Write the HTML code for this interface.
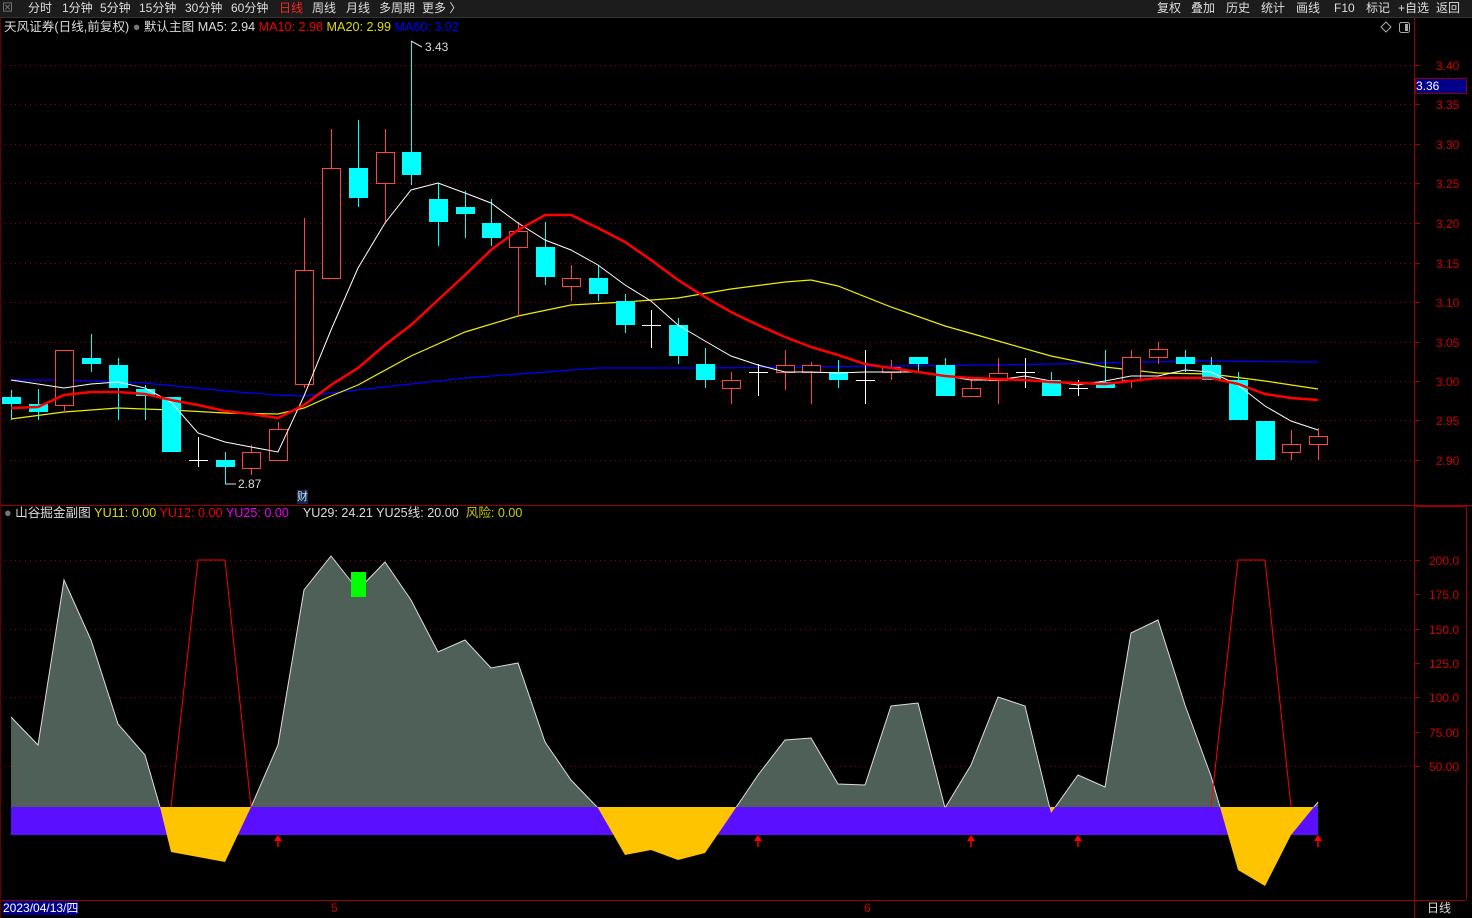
<!DOCTYPE html><html><head><meta charset="utf-8"><style>
body{margin:0;background:#000;width:1472px;height:918px;overflow:hidden;font-family:"Liberation Sans","Noto Sans CJK SC",sans-serif;}
svg{position:absolute;left:0;top:0}
.t{position:absolute;font-size:12px;white-space:nowrap;line-height:14px}
.h{font-size:12.6px}
.b{position:absolute;top:1px;font-size:12px;line-height:14px;color:#ddd;white-space:nowrap}
</style></head><body>
<svg id="s" width="1472" height="918" xmlns="http://www.w3.org/2000/svg">
<rect x="0" y="0" width="1472" height="17" fill="#1c1c1c"/>
<line x1="0" y1="17.5" x2="1472" y2="17.5" stroke="#333"/>
<g id="g"></g>
</svg>
<div class="t" style="left:2px;top:1px;color:#888;font-size:11px">⊠</div>
<div class="b" style="left:28px">分时</div><div class="b" style="left:62px">1分钟</div><div class="b" style="left:100px">5分钟</div><div class="b" style="left:139px">15分钟</div><div class="b" style="left:185px">30分钟</div><div class="b" style="left:231px">60分钟</div><div class="b" style="left:279px;color:#f22">日线</div><div class="b" style="left:312px">周线</div><div class="b" style="left:346px">月线</div><div class="b" style="left:379px">多周期</div><div class="b" style="left:422px">更多 〉</div>
<div class="b" style="left:1157px">复权</div><div class="b" style="left:1191px">叠加</div><div class="b" style="left:1226px">历史</div><div class="b" style="left:1261px">统计</div><div class="b" style="left:1296px">画线</div><div class="b" style="left:1334px">F10</div><div class="b" style="left:1366px">标记</div><div class="b" style="left:1398px">+自选</div><div class="b" style="left:1436px">返回</div>
<div class="t h" style="left:4px;top:20px;color:#ddd">天风证券(日线,前复权) <span style="color:#777">●</span> 默认主图 MA5: 2.94 <span style="color:#e00">MA10: 2.98</span> <span style="color:#dd0">MA20: 2.99</span> <span style="color:#00f">MA60: 3.02</span></div>
<div class="t h" style="left:4px;top:506px;color:#ddd"><span style="color:#777">●</span> 山谷掘金副图 <span style="color:#dd0">YU11: 0.00</span> <span style="color:#e00">YU12: 0.00</span> <span style="color:#e0e">YU25: 0.00</span>&nbsp;&nbsp;&nbsp;&nbsp;YU29: 24.21 YU25线: 20.00&nbsp;&nbsp;<span style="color:#cc0">风险: 0.00</span></div>
<div class="t" style="left:425px;top:40px;color:#ddd">3.43</div>
<div class="t" style="left:238px;top:477px;color:#ddd">2.87</div>
<div class="t" style="left:297px;top:490px;color:#ddd;background:#0a2a5a;font-size:11px">财</div>
<div class="t" style="left:1415px;top:78px;width:50px;background:#00008a;color:#fff;border:1px solid #800">3.36</div>
<div class="t" style="left:3px;top:901px;background:#00008a;color:#fff">2023/04/13/四</div>
<div class="t" style="left:331px;top:901px;color:#c00">5</div>
<div class="t" style="left:864px;top:901px;color:#c00">6</div>
<div class="t" style="left:1427px;top:901px;color:#ddd">日线</div>
<div id="lab"></div>
<script>
const g=document.getElementById('g');let h='';
const L=(a,b,c,d,col,w,ex)=>h+=`<line x1="${a}" y1="${b}" x2="${c}" y2="${d}" stroke="${col}" stroke-width="${w||1}" ${ex||''}/>`;
const py=p=>65+(3.40-p)*790;let lab='';
[3.40,3.35,3.30,3.25,3.20,3.15,3.10,3.05,3.00,2.95,2.90].forEach(p=>{const y=Math.round(py(p))+.5;L(0,y,1414,y,'#900',1,'stroke-dasharray="1 4"');L(1414,y,1420,y,'#900');lab+=`<div class="t" style="left:1436px;top:${y-7}px;color:#c00">${p.toFixed(2)}</div>`});
[[200,'200.0'],[175,'175.0'],[150,'150.0'],[125,'125.0'],[100,'100.0'],[75,'75.00'],[50,'50.00']].forEach(([v,s])=>{const y=Math.round(560+(200-v)*1.373)+.5;if(v%50==0)L(0,y,1414,y,'#900',1,'stroke-dasharray="1 4"');L(1414,y,1420,y,'#900');lab+=`<div class="t" style="left:1429px;top:${y-7}px;color:#c00">${s}</div>`});
document.getElementById('lab').innerHTML=lab;
L(1414.5,18,1414.5,918,'#900');L(1466.5,506,1466.5,900,'#900');L(0,505.5,1472,505.5,'#900');L(1414,506.5,1466,506.5,'#900');L(0,900.5,1466,900.5,'#900');L(0.5,18,0.5,918,'#600');
const cv=[[11,717],[38,745],[64,580],[91,640],[118,724],[145,755],[160,807],[171,852],[198,857],[225,862],[251,807],[278,745],[304,590],[331,556],[358,590],[385,562],[411,600],[438,652],[465,640],[491,668],[518,663],[545,742],[571,780],[598,808],[625,855],[651,850],[678,860],[705,853],[731,815],[758,775],[785,740],[811,738],[838,784],[865,785],[891,706],[918,703],[945,808],[971,765],[998,697],[1025,706],[1051,813],[1078,775],[1105,787],[1131,633],[1158,620],[1185,705],[1211,776],[1220,807],[1238,870],[1265,886],[1291,835],[1318,802]];
const pts=cv.map(p=>p.join(',')).join(' ');
h+=`<defs><clipPath id="a"><rect x="0" y="0" width="1472" height="807"/></clipPath><clipPath id="b"><rect x="0" y="807" width="1472" height="100"/></clipPath></defs>`;
h+=`<rect x="11" y="807" width="1307" height="28" fill="#5a10ff"/>`;
h+=`<polygon points="11,807 ${pts} 1318,807" fill="#4f6058" clip-path="url(#a)"/>`;
h+=`<polygon points="11,807 ${pts} 1318,807" fill="#ffc400" clip-path="url(#b)"/>`;
h+=`<polyline points="${pts}" fill="none" stroke="#ddd" stroke-width="1" clip-path="url(#a)"/>`;
h+=`<polyline points="171,807 198,560 225,560 251,807" fill="none" stroke="#f00"/><polyline points="1211,807 1238,560 1265,560 1291,807" fill="none" stroke="#f00"/>`;
h+=`<rect x="351" y="572" width="15" height="25" fill="#0f0"/>`;
[278,758,971,1078,1318].forEach(x=>{h+=`<polygon points="${x},835 ${x-4},841 ${x+4},841" fill="#f00"/>`;L(x,840,x,847,'#f00',1.5)});
const pl=(a,c,w)=>h+=`<polyline points="${a.map(p=>p.join(',')).join(' ')}" fill="none" stroke="${c}" stroke-width="${w}"/>`;
pl([[11,380],[64,380],[145,383],[225,391],[278,395],[304,396],[358,390],[411,384],[465,378],[545,372],[598,368],[700,368],[800,367],[900,366],[1000,365],[1100,363],[1200,361],[1318,362]],'#00f',1.2);
pl([[11,419],[64,412],[118,408],[171,410],[225,413],[278,414],[304,408],[331,396],[358,385],[411,356],[465,332],[518,316],[571,305],[625,302],[678,298],[731,289],[785,282],[811,280],[838,286],[891,307],[945,326],[998,341],[1051,356],[1105,367],[1158,373],[1211,374],[1265,381],[1318,389]],'#ee0',1.2);
const C=[[11,'c',397,404,390,420],[38,'c',404,412,389,420],[64,'r',350,405,350,412],[91,'c',358,364,334,372],[118,'c',365,388,358,420],[145,'c',389,396,385,420],[171,'c',397,452,397,452],[198,'w',460,460,437,467],[225,'c',460,467,452,484],[251,'r',452,468,445,475],[278,'r',429,460,422,460],[304,'r',270,384,218,388],[331,'r',168,278,129,278],[358,'c',168,198,120,207],[385,'r',152,183,129,222],[411,'c',152,175,41,185],[438,'c',199,222,183,246],[465,'c',207,214,191,238],[491,'c',223,238,199,246],[518,'r',231,247,222,317],[545,'c',247,277,222,285],[571,'r',278,286,265,301],[598,'c',278,294,265,301],[625,'c',301,325,294,333],[651,'w',325,325,310,348],[678,'c',325,356,318,364],[705,'c',364,380,348,388],[731,'r',380,388,372,404],[758,'w',372,372,364,396],[785,'r',365,372,350,390],[811,'r',365,372,362,404],[838,'c',372,380,360,388],[865,'w',380,380,350,404],[891,'r',367,372,360,380],[918,'c',357,364,357,372],[945,'c',365,396,358,396],[971,'r',388,396,380,396],[998,'r',373,380,358,404],[1025,'w',372,372,358,388],[1051,'c',380,396,372,396],[1078,'w',388,388,380,396],[1105,'c',382,388,350,388],[1131,'r',357,380,350,388],[1158,'r',349,357,342,364],[1185,'c',357,364,350,372],[1211,'c',365,380,357,380],[1238,'c',380,420,372,420],[1265,'c',421,460,421,460],[1291,'r',444,452,430,460],[1318,'r',436,444,428,460]];
C.forEach(([x,t,o,c,hi,lo])=>{const col=t=='c'?'#0ff':t=='r'?'#f44':'#fff';L(x+.5,hi,x+.5,lo,col);
if(t=='c')h+=`<rect x="${x-9}" y="${o}" width="19" height="${Math.max(c-o,2)}" fill="#0ff"/>`;
else if(t=='r')h+=`<rect x="${x-8.5}" y="${o+.5}" width="18" height="${c-o}" fill="#000" stroke="#f44"/>`;
else L(x-9,o+.5,x+10,o+.5,'#fff')});
pl([[11,380],[38,384],[64,388],[91,384],[118,382],[145,388],[171,402],[198,433],[225,442],[251,447],[278,452],[304,396],[331,330],[358,268],[385,223],[411,190],[438,183],[465,193],[491,203],[518,223],[545,240],[571,250],[598,265],[625,285],[651,301],[678,325],[705,341],[731,356],[758,365],[785,372],[811,372],[838,373],[865,372],[891,372],[918,372],[945,376],[971,380],[998,380],[1025,376],[1051,381],[1078,385],[1105,381],[1131,376],[1158,376],[1185,370],[1211,372],[1238,385],[1265,406],[1291,421],[1318,430]],'#fff',1);
pl([[11,408],[38,407],[64,395],[91,392],[118,392],[145,394],[171,400],[198,405],[225,411],[251,414],[278,418],[304,405],[331,385],[358,368],[385,345],[411,325],[438,300],[465,275],[491,250],[518,230],[545,215],[571,215],[598,228],[625,242],[651,260],[678,280],[705,297],[731,312],[758,325],[785,337],[811,347],[838,355],[865,364],[891,368],[918,372],[945,376],[971,378],[998,379],[1025,380],[1051,382],[1078,383],[1105,384],[1131,381],[1158,378],[1185,378],[1211,378],[1238,384],[1265,394],[1291,398],[1318,400]],'#f00',2.5);
L(411,41,422,47,'#ddd');L(225,484,236,484,'#ddd');
h+=`<polygon points="1386,22 1391,27 1386,32 1381,27" fill="none" stroke="#aaa"/><rect x="1399.5" y="22.5" width="10" height="10" rx="2" fill="none" stroke="#aaa"/><rect x="1405" y="24" width="3" height="7" fill="#aaa"/>`;
g.innerHTML=h;
</script>
</body></html>
